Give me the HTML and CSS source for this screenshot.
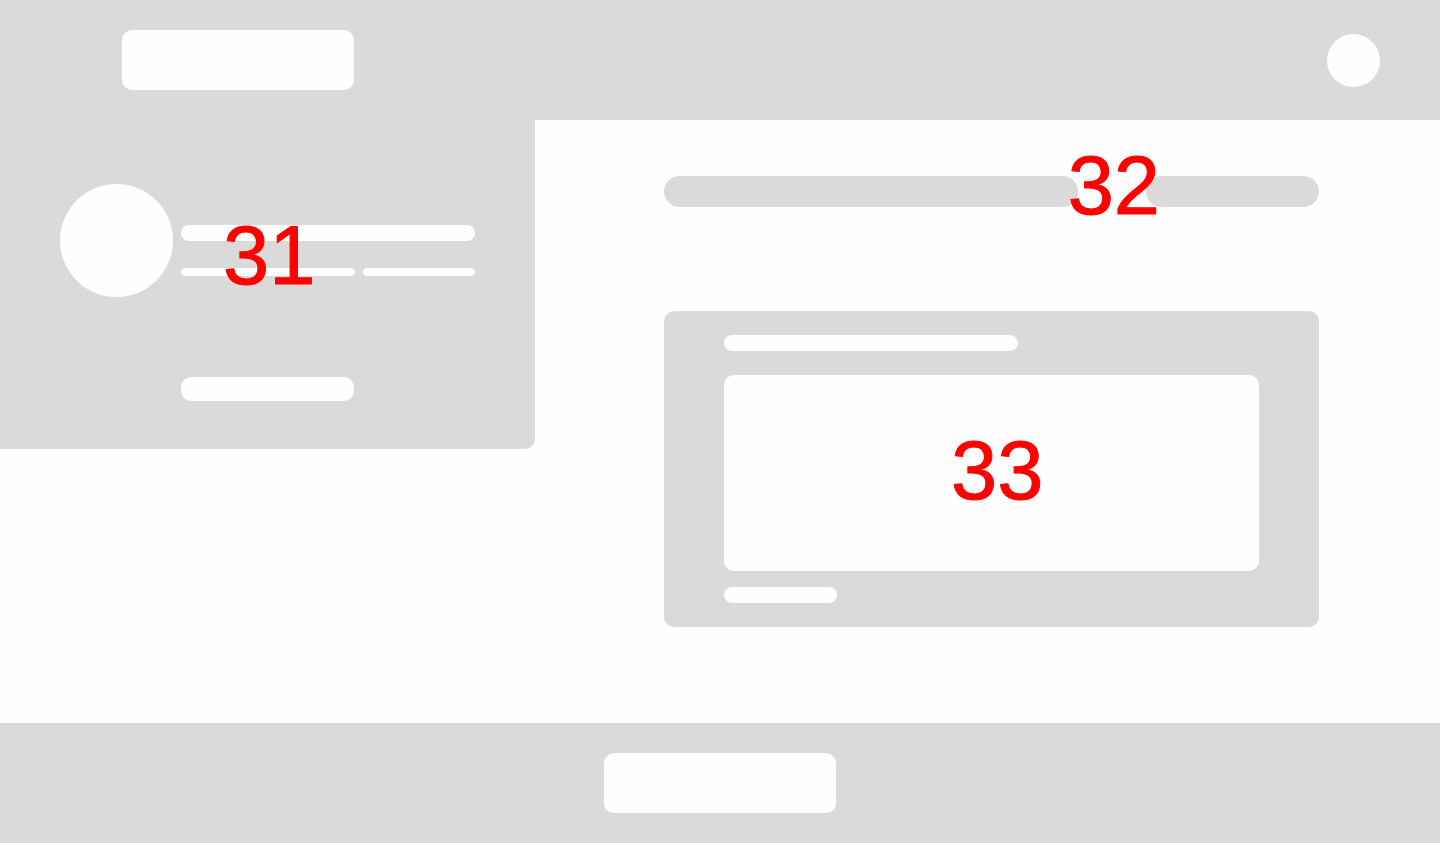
FILE: index.html
```html
<!DOCTYPE html>
<html lang="en">
<head>
<meta charset="utf-8">
<meta name="viewport" content="width=device-width, initial-scale=1">
<title>Wireframe</title>
<link rel="stylesheet" href="styles.css">
</head>
<body>
<header class="header">
  <div class="block"></div>
  <div class="header-avatar"></div>
</header>
<main class="main">
  <section class="profile">
    <div class="profile-row">
      <div class="profile-avatar"></div>
      <div class="profile-lines">
        <div class="line"></div>
        <div class="line-pair">
          <div class="line line-thin"></div>
          <div class="line line-thin"></div>
        </div>
        <span class="number number-profile">31</span>
      </div>
    </div>
    <div class="profile-action"></div>
  </section>
  <section class="content">
    <div class="filters">
      <div class="pill"></div>
      <div class="pill"></div>
      <span class="number number-filters">32</span>
    </div>
    <article class="card">
      <div class="line card-title"></div>
      <div class="card-body"><span class="number number-card">33</span></div>
      <div class="line card-note"></div>
    </article>
  </section>
</main>
<footer class="footer">
  <div class="block"></div>
</footer>
</body>
</html>
```

FILE: styles.css
```css
:root {
  --gray: #dadada;
  --white: #fefefe;
}

* {
  box-sizing: border-box;
}

body {
  margin: 0;
  min-height: 100vh;
  display: flex;
  flex-direction: column;
  background: var(--white);
  font-family: "Liberation Sans", Arial, sans-serif;
}

.header {
  display: flex;
  align-items: center;
  justify-content: space-between;
  padding: 30px 60px 30px 122px;
  background: var(--gray);
}

.block {
  width: 232px;
  height: 60px;
  border-radius: 10px;
  background: var(--white);
}

.header-avatar {
  width: 53px;
  height: 53px;
  border-radius: 50%;
  background: var(--white);
}

.main {
  flex: 1;
  display: grid;
  grid-template-columns: 535fr 905fr;
  align-items: start;
}

.profile {
  padding: 64px 60px 48px;
  border-radius: 0 0 10px 0;
  background: var(--gray);
}

.profile-row {
  display: flex;
  gap: 8px;
}

.profile-avatar {
  flex: none;
  width: 113px;
  height: 113px;
  border-radius: 50%;
  background: var(--white);
}

.profile-lines {
  position: relative;
  flex: 1;
  display: flex;
  flex-direction: column;
  gap: 27px;
  padding-top: 41px;
}

.line {
  height: 16px;
  border-radius: 8px;
  background: var(--white);
}

.line-pair {
  display: grid;
  grid-template-columns: 174fr 112fr;
  gap: 8px;
}

.line-thin {
  height: 8px;
}

.profile-action {
  width: 173px;
  height: 24px;
  margin: 80px 0 0 121px;
  border-radius: 10px;
  background: var(--white);
}

.content {
  display: flex;
  flex-direction: column;
  gap: 104px;
  padding: 56px 121px 96px 129px;
}

.filters {
  position: relative;
  display: grid;
  grid-template-columns: 414fr 173fr;
  gap: 68px;
}

.pill {
  height: 31px;
  border-radius: 16px;
  background: var(--gray);
}

.card {
  display: flex;
  flex-direction: column;
  padding: 24px 60px;
  border-radius: 10px;
  background: var(--gray);
}

.card-title {
  width: 55%;
}

.card-body {
  position: relative;
  height: 196px;
  margin: 24px 0 16px;
  border-radius: 10px;
  background: var(--white);
}

.card-note {
  width: 113px;
}

.footer {
  display: flex;
  justify-content: center;
  padding: 30px;
  background: var(--gray);
}

/* Section numbers lie over the placeholders */
.number {
  position: absolute;
  color: #ff0000;
  font-size: 83px;
  line-height: 84px;
  -webkit-text-stroke: 1px #ff0000;
}

.number-profile {
  top: 30px;
  left: 42px;
}

.number-filters {
  top: -32px;
  right: 159px;
}

.number-card {
  top: 54px;
  left: 227px;
}
```
